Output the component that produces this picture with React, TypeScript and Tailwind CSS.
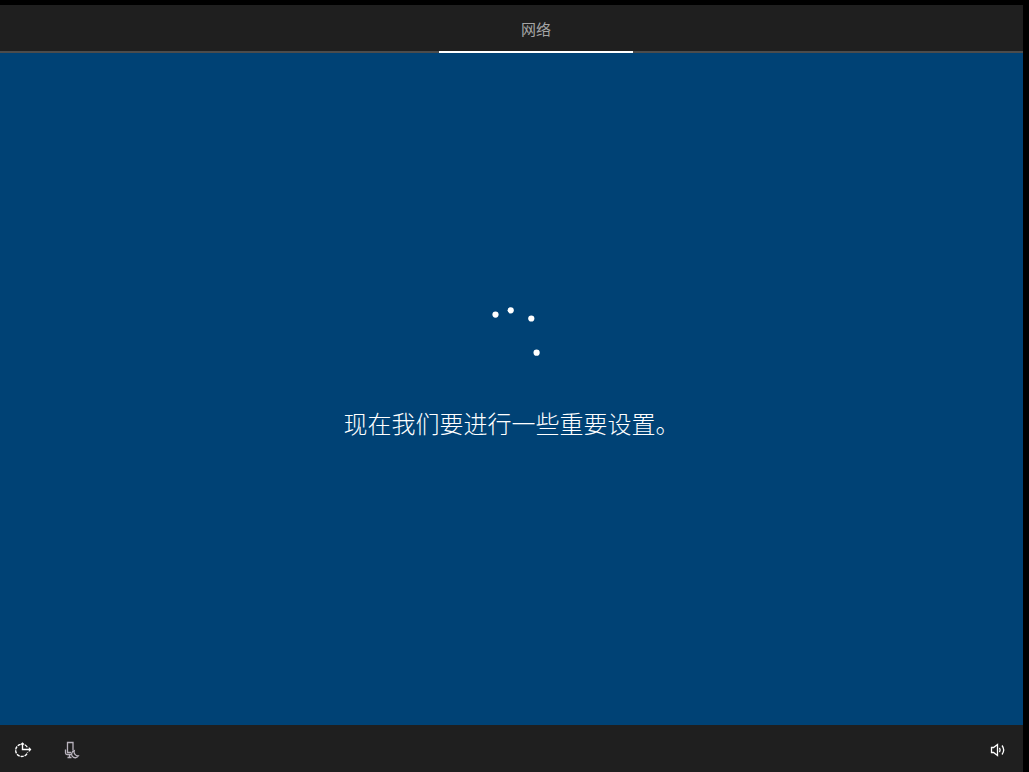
function Spinner() {
  return (
    <svg viewBox="0 0 60 60" className="size-[60px] fill-white" role="status" aria-label="正在加载">
      <circle cx="13.5" cy="9.6" r="3.1" />
      <circle cx="28.7" cy="5.3" r="3.1" />
      <circle cx="49.3" cy="13.5" r="3.1" />
      <circle cx="54.6" cy="47.7" r="3.1" />
    </svg>
  );
}

function EaseOfAccessIcon() {
  return (
    <svg viewBox="0 0 18 18" className="size-[18px]" fill="none" stroke="#fff" strokeWidth="1.4">
      <path d="M6.6 3.4A6.1 6.1 0 1 0 13.6 11.2" strokeDasharray="3.2 0.9" />
      <path d="M10.8 3.7A6.1 6.1 0 0 1 13.3 6.2" strokeWidth="1.2" />
      <path d="M8.5 2V8.5H16.5" />
      <path d="M6.9 3.6L8.5 2L10.1 3.6M14.8 6.7L16.6 8.5L14.8 10.3" strokeWidth="1.1" />
    </svg>
  );
}

function MicrophoneIcon() {
  return (
    <svg viewBox="0 0 18 18" className="size-[18px]" fill="none" stroke="#b9b3bd" strokeWidth="1.3">
      <path d="M9 11.5H5.5V1.5H11V9.5" />
      <path d="M3.5 8.5V12Q3.5 13.5 5 13.5H9M7.5 13.5V16.5M5.5 16.5H9.5" />
      <path d="M12.2 9.7A3.6 3.6 0 1 0 16.4 14.8A4 4 0 0 1 12.2 9.7Z" />
    </svg>
  );
}

function VolumeIcon() {
  return (
    <svg viewBox="0 0 18 18" className="size-[18px]" fill="none" stroke="#fff" strokeWidth="1.3">
      <path d="M2.5 6.5H4.5L8.5 3.5V14.5L4.5 11.5H2.5Z" />
      <path d="M10.5 6.8Q11.8 9 10.5 11.2" />
      <path d="M13 4.5Q16.4 9 13 13.5" />
    </svg>
  );
}

export default function App() {
  return (
    <div className="flex min-h-screen flex-col bg-black pt-[5px] pr-[6px] font-['Noto_Sans_CJK_SC',sans-serif]">
      <header className="flex h-12 justify-center border-b-2 border-[#4c4c4c] bg-[#1f1f1f] pl-[49px]">
        <button
          type="button"
          className="-mb-[2px] flex w-[194px] items-center justify-center border-b-2 border-white pt-[2px] text-[15px] leading-6 text-[#a5a5a5]"
        >
          网络
        </button>
      </header>
      <main className="flex flex-1 flex-col items-center justify-center gap-[42px] bg-[#004275] pb-[34px]">
        <Spinner />
        <h1 className="text-2xl leading-8 font-light text-white">现在我们要进行一些重要设置。</h1>
      </main>
      <footer className="flex h-[47px] items-center justify-between bg-[#1f1f1f] pt-[2px] pr-4 pl-[14px]">
        <div className="flex gap-[30px]">
          <button type="button" aria-label="轻松使用">
            <EaseOfAccessIcon />
          </button>
          <button type="button" aria-label="麦克风">
            <MicrophoneIcon />
          </button>
        </div>
        <button type="button" aria-label="音量">
          <VolumeIcon />
        </button>
      </footer>
    </div>
  );
}
